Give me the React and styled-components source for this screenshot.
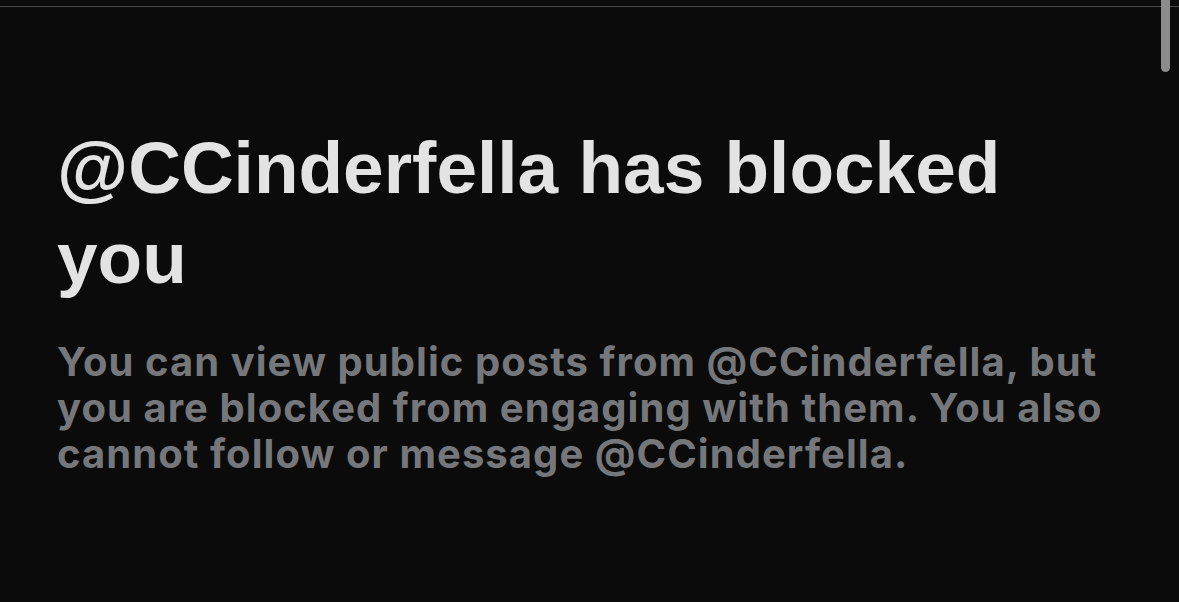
import React from "react";
import styled, { createGlobalStyle } from "styled-components";

const Global = createGlobalStyle`
  html, body {
    margin: 0;
    padding: 0;
    background: #0b0b0b;
    overflow: hidden;
  }
`;

const Screen = styled.div`
  position: relative;
  width: 1179px;
  height: 602px;
  background: #0b0b0b;
`;

const TopRule = styled.div`
  height: 6px;
  border-bottom: 1px solid #4a4a4a;
`;

const ScrollThumb = styled.div`
  position: absolute;
  top: 0;
  right: 9px;
  width: 9px;
  height: 72px;
  background: #8c8c8c;
  border-radius: 0 0 5px 5px;
`;

const Content = styled.div`
  width: 1053px;
  padding: 116px 0 0 57px;
`;

const Title = styled.h1`
  margin: 0;
  font-family: "Liberation Sans", Arial, sans-serif;
  font-weight: 700;
  font-size: 73px;
  line-height: 90px;
  letter-spacing: 0;
  color: #e3e3e3;
`;

const Body = styled.p`
  margin: 36px 0 0;
  font-family: Inter, "Liberation Sans", sans-serif;
  font-weight: 700;
  font-size: 40px;
  line-height: 46px;
  letter-spacing: 1.05px;
  color: #75777b;
`;

export default function App() {
  return (
    <Screen>
      <Global />
      <TopRule />
      <ScrollThumb />
      <Content>
        <Title>@CCinderfella has blocked you</Title>
        <Body>
          You can view public posts from @CCinderfella, but you are blocked
          from engaging with them. You also cannot follow or message
          @CCinderfella.
        </Body>
      </Content>
    </Screen>
  );
}
